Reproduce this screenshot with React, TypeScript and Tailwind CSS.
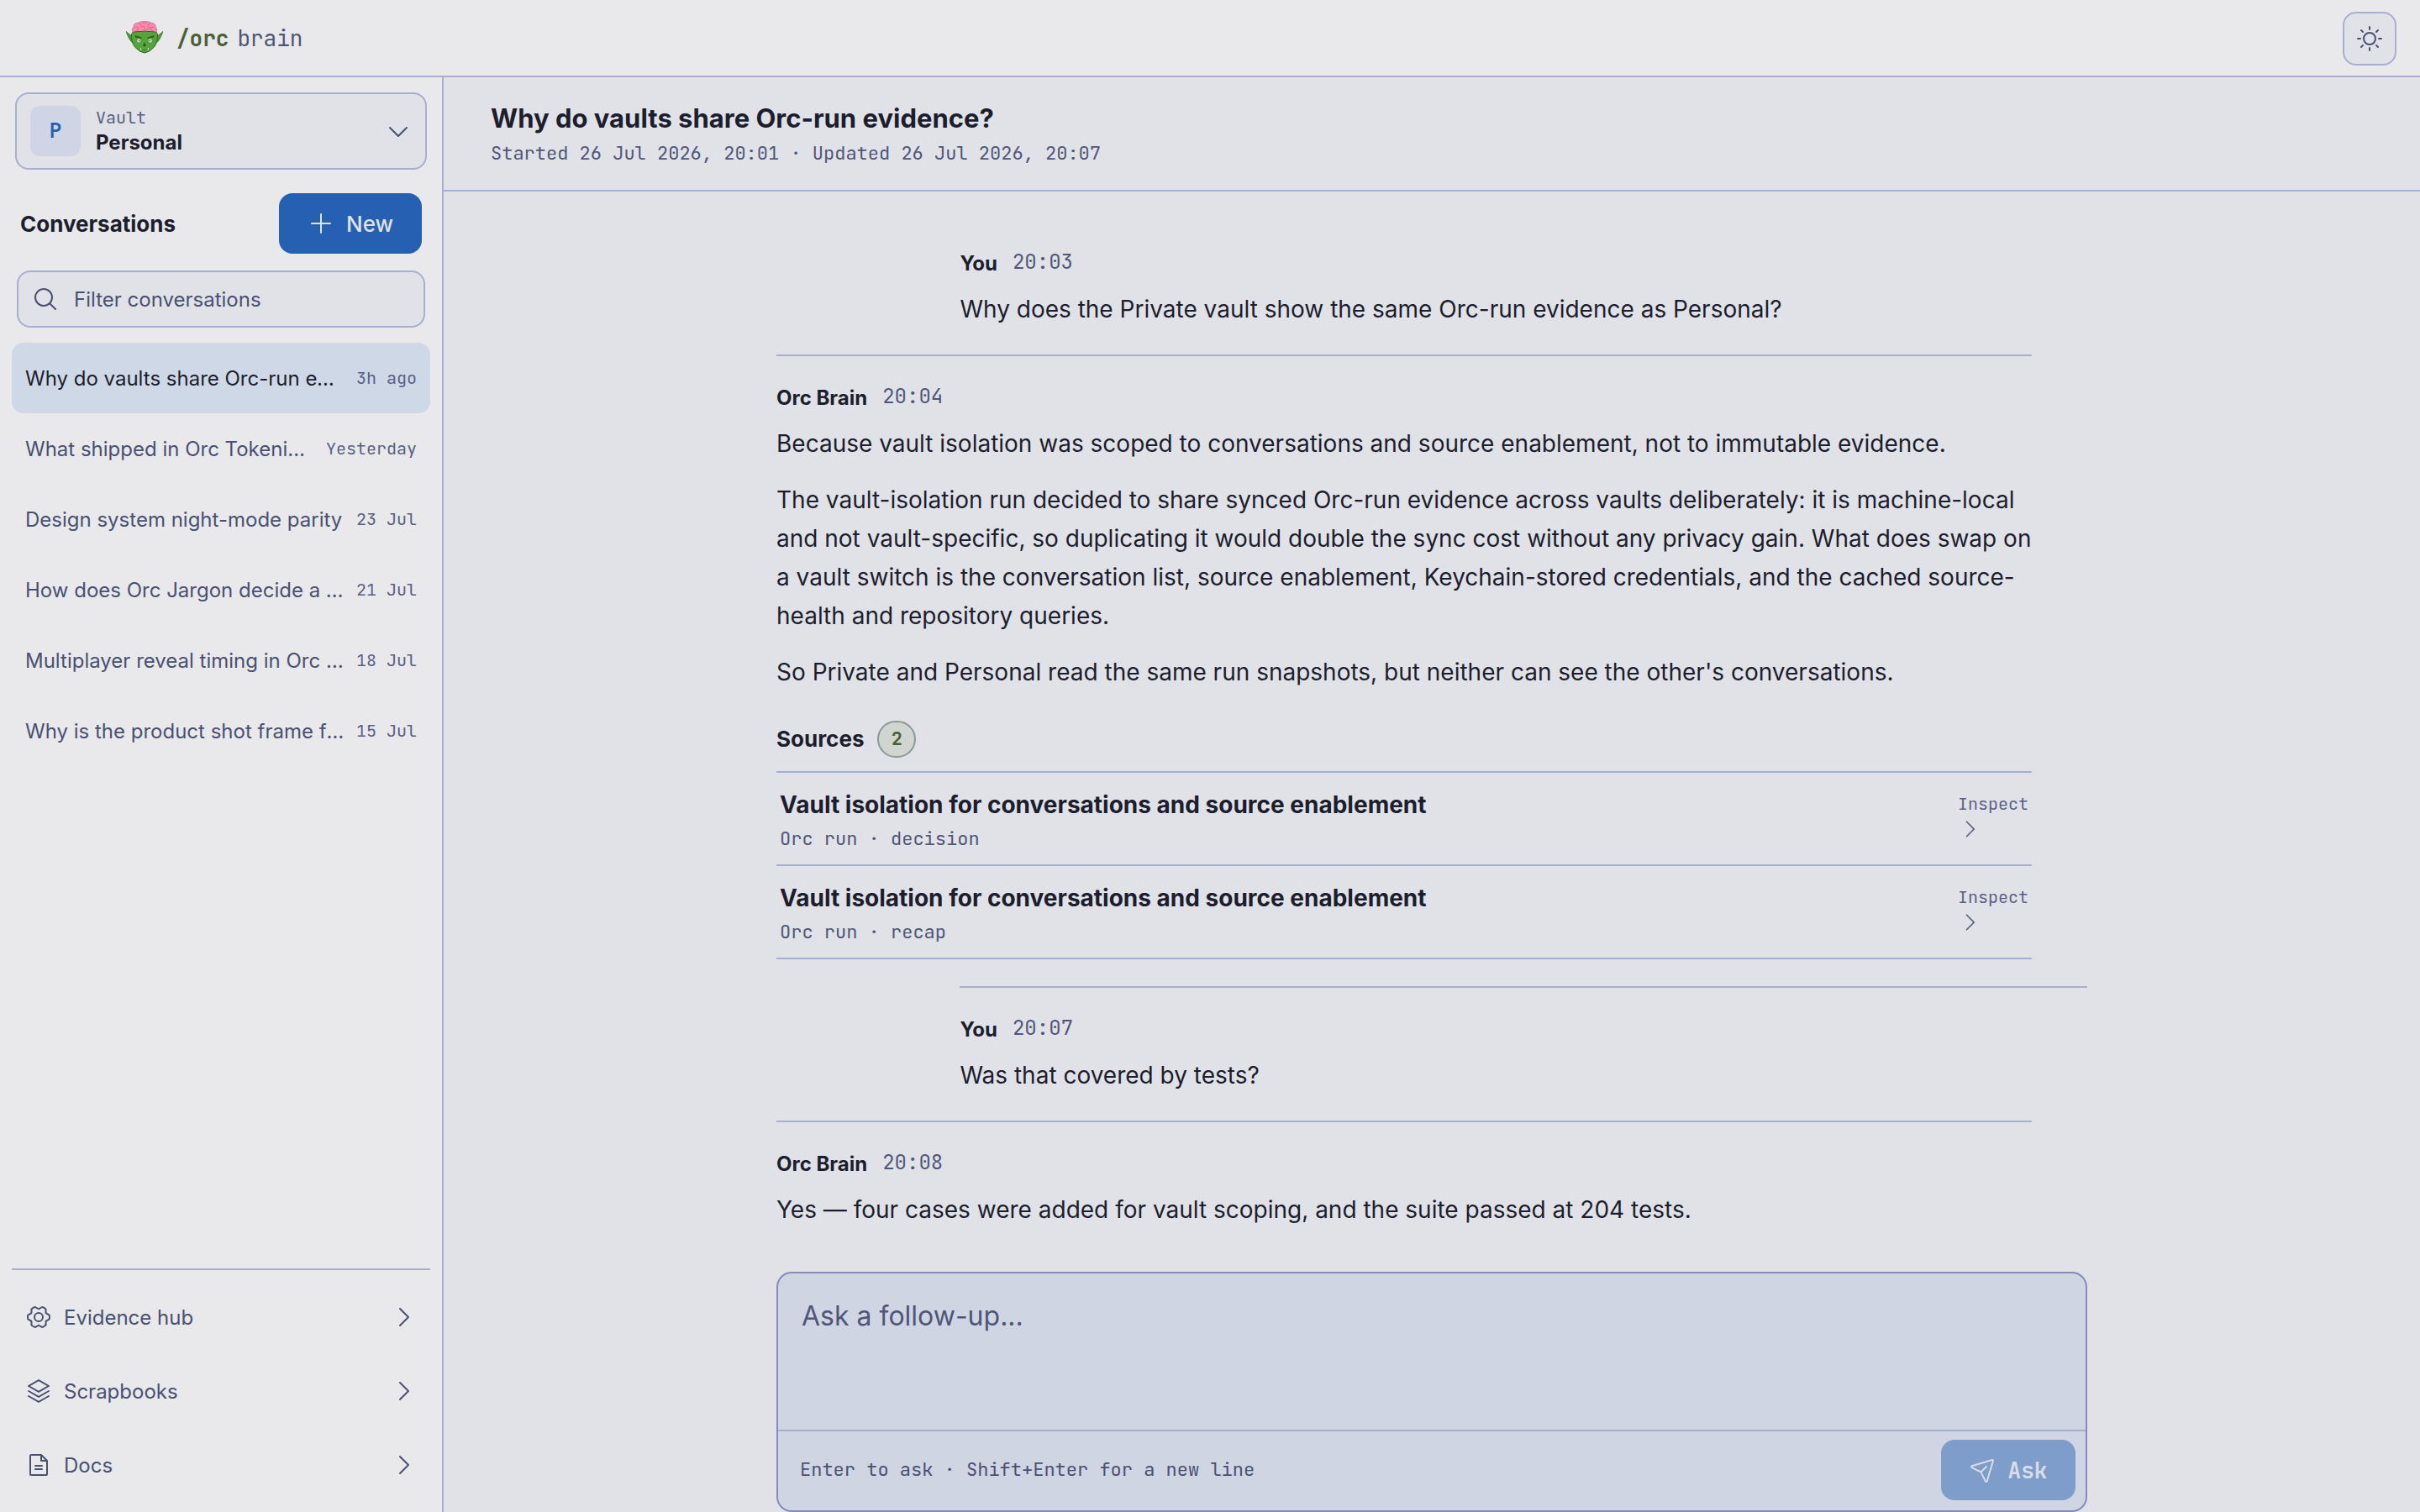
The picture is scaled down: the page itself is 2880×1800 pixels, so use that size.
import React from "react";
import {
  PiCaretDown,
  PiCaretRight,
  PiFileText,
  PiGearSix,
  PiMagnifyingGlass,
  PiPaperPlaneTilt,
  PiPlus,
  PiStack,
  PiSun,
} from "react-icons/pi";

const conversations = [
  { title: "Why do vaults share Orc-run evidence?", time: "3h ago" },
  { title: "What shipped in Orc Tokenizer?", time: "Yesterday" },
  { title: "Design system night-mode parity", time: "23 Jul" },
  { title: "How does Orc Jargon decide a winner?", time: "21 Jul" },
  { title: "Multiplayer reveal timing in Orc Jargon", time: "18 Jul" },
  { title: "Why is the product shot frame fixed?", time: "15 Jul" },
];

const links = [
  { label: "Evidence hub", Icon: PiGearSix },
  { label: "Scrapbooks", Icon: PiStack },
  { label: "Docs", Icon: PiFileText },
];

const sources = [
  {
    title: "Vault isolation for conversations and source enablement",
    kind: "Orc run · decision",
  },
  {
    title: "Vault isolation for conversations and source enablement",
    kind: "Orc run · recap",
  },
];

const mono = "font-['JetBrains_Mono','DejaVu_Sans_Mono',monospace]";

const OrcLogo = () => (
  <svg width="44" height="40" viewBox="0 0 44 40" aria-hidden="true">
    {/* Ears */}
    <path d="M0 12.500 L8 19 L9 27 Q4 24 0 12.500Z" fill="#4f9a36" stroke="#2f6b25" strokeWidth="0.7" />
    <path d="M44 12.500 L36 19 L35 27 Q40 24 44 12.500Z" fill="#4f9a36" stroke="#2f6b25" strokeWidth="0.7" />
    {/* Brain */}
    <path
      d="M8 15 Q6.500 8.500 9 7 Q8.500 2.500 14.500 2 Q17 0.200 22 0.400 Q27 0.200 29.500 2 Q35.500 2.500 35 7 Q37.500 8.500 36 15Z"
      fill="#fb8bae"
      stroke="#cf6089"
      strokeWidth="0.7"
    />
    <path
      d="M10.500 7.500q3-1.500 4 1t-2 3M15.500 3q2 0 2.500 2.500M19.500 2.500q3-2 5 0M18 7q2.500-2 4 0v4M28.500 3q-2.500 0-2.500 3t4 1.500M33.500 7.500q-3-1-4 1t2 3M24.500 9.500q2-1 3 1.500"
      fill="none"
      stroke="#c4587f"
      strokeWidth="0.7"
      strokeLinecap="round"
    />
    {/* Face */}
    <path
      d="M6.500 15.500 Q7 13.200 11 12.800 Q22 11.500 33 12.800 Q37 13.200 37.500 15.500 Q38 25 33.500 31 Q27.500 37.500 22 38 Q16.500 37.500 10.500 31 Q6 25 6.500 15.500Z"
      fill="#56a23b"
      stroke="#2f6b25"
      strokeWidth="1"
    />
    <path d="M10.500 17 L18.500 19.500 L18.500 21 L11 19.500Z M33.500 17 L25.500 19.500 L25.500 21 L33 19.500Z" fill="#2b5f20" />
    <circle cx="15.300" cy="23.500" r="2" fill="#e4ebde" />
    <circle cx="28.700" cy="23.500" r="2" fill="#e4ebde" />
    <circle cx="15.600" cy="23.600" r="0.8" fill="#25382a" />
    <circle cx="28.400" cy="23.600" r="0.8" fill="#25382a" />
    <path d="M22 25.500 L24 29.300 L22 30.500 L20 29.300Z" fill="#2b5f20" />
    <path d="M17 31q0 3.500 5 3.500q5 0 5-3.500" fill="none" stroke="#3a7a2b" strokeWidth="0.8" />
    <path d="M17 34 L17.200 31 L18.800 34.500Z M27 34 L26.800 31 L25.200 34.500Z" fill="#f1f1e8" />
  </svg>
);

interface MessageProps {
  author: string;
  time: string;
  own?: boolean;
  first?: boolean;
  children: React.ReactNode;
}

const Message: React.FC<MessageProps> = ({ author, time, own, first, children }) => (
  <article
    className={`border-t-2 pt-[31px] ${first ? "border-transparent" : "border-[#a8aecf]"} ${
      own ? "ml-[14%] pb-[31px]" : "max-w-[1494px] pb-8"
    }`}
  >
    <header className="mb-[14px] flex h-9 items-center gap-[18px] text-[24px]">
      <strong className="pt-0.5 font-bold">{author}</strong>
      <time className={`${mono} pb-0.5 text-[#4f5678]`}>{time}</time>
    </header>
    <div className="flex flex-col gap-[21px] text-[28px] leading-[46px]">{children}</div>
  </article>
);

const App: React.FC = () => {
  return (
    <div className="flex h-screen flex-col overflow-hidden bg-[#e1e2e7] font-['Inter',sans-serif] text-[#1c1e2e]">
      <header className="flex h-[92px] shrink-0 items-center justify-between border-b-2 border-[#a8aecf] bg-[#e9e9eb] pr-7 pl-[150px]">
        <a href="#" className="flex items-center gap-4">
          <OrcLogo />
          <span className={`${mono} flex gap-[10px] text-[26px] text-[#4f5678]`}>
            <strong className="font-bold text-[#4a5f38]">/orc</strong>
            brain
          </span>
        </a>
        <button
          aria-label="Toggle theme"
          className="mt-0.5 flex size-16 items-center justify-center rounded-[16px] border-2 border-[#a8aecf] bg-[#e1e2e7] text-[#4a5072]"
        >
          <PiSun size={32} />
        </button>
      </header>

      <div className="flex min-h-0 flex-1">
        {/* Sidebar */}
        <aside className="flex w-[528px] shrink-0 flex-col border-r-2 border-[#a8aecf] bg-[#e9e9eb] pt-[18px] pb-3 text-[24px] text-[#4a5072]">
          <button className="mx-[18px] flex h-[92px] items-center gap-[18px] rounded-[16px] border-2 border-[#a8aecf] bg-[#e1e2e7] px-4 text-left">
            <span
              className={`${mono} flex size-[60px] items-center justify-center rounded-[12px] bg-[#cfd5e4] font-bold text-[#2660b2]`}
            >
              P
            </span>
            <span className="flex flex-1 flex-col">
              <span className={`${mono} text-[20px] leading-[28px] text-[#5a6084]`}>Vault</span>
              <strong className="leading-[32px] font-bold text-[#1c1e2e]">Personal</strong>
            </span>
            <PiCaretDown size={32} />
          </button>

          <div className="mx-6 mt-7 flex items-center justify-between text-[26px]">
            <h2 className="font-bold text-[#1c1e2e]">Conversations</h2>
            <button className="flex h-[72px] w-[170px] items-center justify-center gap-[14px] rounded-[16px] bg-[#2660b2] font-medium text-[#e1e2e7]">
              <PiPlus size={32} />
              New
            </button>
          </div>

          <label className="mx-5 mt-5 flex h-[68px] items-center gap-[18px] rounded-[16px] border-2 border-[#a8aecf] bg-[#e1e2e7] px-4">
            <PiMagnifyingGlass size={32} />
            <input
              type="text"
              aria-label="Filter conversations"
              placeholder="Filter conversations"
              className="min-w-0 flex-1 bg-transparent pt-0.5 outline-none placeholder:text-[#4a5072]"
            />
          </label>

          <nav aria-label="Conversations" className="mx-[14px] mt-[18px] flex-1">
            {conversations.map((item, i) => (
              <a
                key={item.title}
                href="#"
                className={`flex h-[84px] items-center gap-[14px] rounded-[14px] px-4 ${
                  i === 0 ? "bg-[#cfd8e6] text-[#1c1e2e]" : ""
                }`}
              >
                <span className="flex-1 truncate pt-0.5">{item.title}</span>
                <time className={`${mono} text-[20px] text-[#5a6084]`}>{item.time}</time>
              </a>
            ))}
          </nav>

          <nav aria-label="Library" className="mx-[14px] border-t-2 border-[#a8aecf] pt-3">
            {links.map(({ label, Icon }) => (
              <a key={label} href="#" className="flex h-[88px] items-center gap-[14px] px-4">
                <Icon size={32} />
                <span className="flex-1 pt-0.5">{label}</span>
                <PiCaretRight size={32} />
              </a>
            ))}
          </nav>
        </aside>

        {/* Conversation */}
        <main className="flex min-w-0 flex-1 flex-col">
          <header className="flex h-[136px] shrink-0 flex-col border-b-2 border-[#a8aecf] px-14 pt-[29px]">
            <h1 className="text-[31px] leading-[40px] font-bold">
              Why do vaults share Orc-run evidence?
            </h1>
            <p className={`${mono} mt-1 text-[22px] leading-[36px] text-[#4f5678]`}>
              Started 26 Jul 2026, 20:01 · Updated 26 Jul 2026, 20:07
            </p>
          </header>

          <div className="min-h-0 flex-1 overflow-hidden">
            <div className="mx-auto max-w-[1560px] pt-[34px]">
              <Message author="You" time="20:03" own first>
                <p>Why does the Private vault show the same Orc-run evidence as Personal?</p>
              </Message>

              <Message author="Orc Brain" time="20:04">
                <p>
                  Because vault isolation was scoped to conversations and source enablement, not to
                  immutable evidence.
                </p>
                <p>
                  The vault-isolation run decided to share synced Orc-run evidence across vaults
                  deliberately: it is machine-local and not vault-specific, so duplicating it would
                  double the sync cost without any privacy gain. What does swap on a vault switch is
                  the conversation list, source enablement, Keychain-stored credentials, and the
                  cached source-health and repository queries.
                </p>
                <p>
                  So Private and Personal read the same run snapshots, but neither can see the
                  other's conversations.
                </p>
                <section className="mt-[14px]">
                  <h3 className="mb-4 flex h-11 items-center gap-4 text-[26px] font-bold">
                    Sources
                    <span
                      className={`${mono} flex h-11 w-[46px] items-center justify-center rounded-full border-2 border-[#8b9a94] bg-[#d0d5d0] text-[22px] text-[#4a5f38]`}
                    >
                      2
                    </span>
                  </h3>
                  <ul className="border-t-2 border-[#a8aecf]">
                    {sources.map((source) => (
                      <li key={source.kind} className="border-b-2 border-[#a8aecf]">
                        <a href="#" className="flex justify-between px-1 pt-[17px] pb-[10px]">
                          <span className="flex flex-col">
                            <strong className="leading-[42px] font-bold">{source.title}</strong>
                            <span className={`${mono} text-[22px] leading-[40px] text-[#4f5678]`}>
                              {source.kind}
                            </span>
                          </span>
                          <span className={`${mono} pt-1 text-[20px] leading-[32px] text-[#5a6084]`}>
                            Inspect
                            <PiCaretRight size={28} className="block" />
                          </span>
                        </a>
                      </li>
                    ))}
                  </ul>
                </section>
              </Message>

              <Message author="You" time="20:07" own>
                <p>Was that covered by tests?</p>
              </Message>

              <Message author="Orc Brain" time="20:08">
                <p>Yes — four cases were added for vault scoping, and the suite passed at 204 tests.</p>
              </Message>
            </div>
          </div>

          <form className="mx-auto flex w-full max-w-[1560px] shrink-0 flex-col rounded-[18px] border-2 border-[#858cba] bg-[#cfd5e3]">
            <textarea
              aria-label="Ask a follow-up"
              placeholder="Ask a follow-up..."
              className="block h-[186px] resize-none bg-transparent px-7 pt-7 text-[32px] leading-[46px] outline-none placeholder:text-[#4f5678]"
            />
            <div className="flex items-center justify-between border-t-2 border-[#a8aecf] pt-[10px] pr-3 pb-3 pl-[26px]">
              <span className={`${mono} pb-0.5 text-[22px] text-[#4a5072]`}>
                Enter to ask · Shift+Enter for a new line
              </span>
              <button
                type="button"
                className={`${mono} flex h-[72px] w-40 items-center justify-center gap-[14px] rounded-[16px] bg-[#7e9dcb] text-[26px] font-bold text-[#d8dce6]`}
              >
                <PiPaperPlaneTilt size={32} />
                Ask
              </button>
            </div>
          </form>
        </main>
      </div>
    </div>
  );
};

export default App;
